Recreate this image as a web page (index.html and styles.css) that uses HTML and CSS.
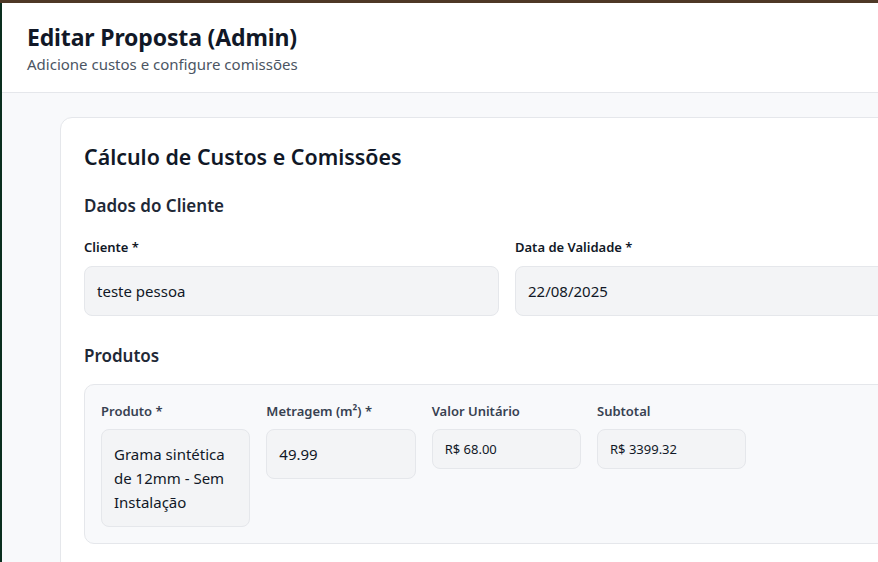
FILE: index.html
```html
<!DOCTYPE html>
<html lang="pt-BR">
<head>
<meta charset="utf-8">
<title>Editar Proposta (Admin)</title>
<link rel="stylesheet" href="styles.css">
</head>
<body>
<div class="window">
  <header class="page-header">
    <h1 class="page-title">Editar Proposta (Admin)</h1>
    <p class="page-subtitle">Adicione custos e configure comissões</p>
  </header>
  <main class="content">
    <section class="card">
      <h2 class="card-title">Cálculo de Custos e Comissões</h2>

      <h3 class="section-title">Dados do Cliente</h3>
      <div class="client-grid">
        <div class="field">
          <label class="label">Cliente *</label>
          <div class="input">teste pessoa</div>
        </div>
        <div class="field">
          <label class="label">Data de Validade *</label>
          <div class="input">22/08/2025</div>
        </div>
      </div>

      <h3 class="section-title products-title">Produtos</h3>
      <div class="product-box">
        <div class="product-grid">
          <div class="field">
            <label class="label label-muted">Produto *</label>
            <div class="input">Grama sintética de 12mm - Sem Instalação</div>
          </div>
          <div class="field">
            <label class="label label-muted">Metragem (m²) *</label>
            <div class="input">49.99</div>
          </div>
          <div class="field">
            <label class="label label-muted">Valor Unitário</label>
            <div class="input input-small">R$ 68.00</div>
          </div>
          <div class="field">
            <label class="label label-muted">Subtotal</label>
            <div class="input input-small">R$ 3399.32</div>
          </div>
        </div>
      </div>
    </section>
  </main>
</div>
</body>
</html>
```

FILE: styles.css
```css
html, body {
  margin: 0;
  padding: 0;
  overflow: hidden;
  height: 100%;
}

body {
  font-family: "Noto Sans", "Open Sans", sans-serif;
  color: #111827;
  background: #f8f9fb;
  border-top: 3px solid #4e3826;
  box-sizing: border-box;
}

.window {
  border-left: 2px solid #0a2e1e;
  min-height: 100%;
  box-sizing: border-box;
}

.page-header {
  background: #ffffff;
  border-bottom: 1px solid #e5e7eb;
  padding: 19px 25px 18px;
  height: 90px;
  box-sizing: border-box;
}

.page-title {
  margin: 0 0 2px;
  font-size: 23px;
  line-height: 30px;
  font-weight: 700;
  color: #111827;
  letter-spacing: -0.15px;
}

.page-subtitle {
  margin: 0;
  font-size: 15px;
  line-height: 20px;
  color: #4b5563;
}

.content {
  padding: 24px 0 0 58px;
}

.card {
  width: 894px;
  box-sizing: border-box;
  background: #ffffff;
  border: 1px solid #e5e7eb;
  border-radius: 12px;
  padding: 23px 23px 24px;
  min-height: 480px;
}

.card-title {
  margin: 0 0 19px;
  font-size: 21.4px;
  line-height: 32px;
  font-weight: 600;
  color: #111827;
}

.section-title {
  margin: 0 0 17px;
  font-size: 17px;
  line-height: 28px;
  font-weight: 600;
  color: #1f2937;
}

.products-title {
  margin-top: 26px;
  margin-bottom: 14px;
}

.client-grid {
  display: grid;
  grid-template-columns: 415px 1fr;
  column-gap: 16px;
}

.field {
  display: flex;
  flex-direction: column;
}

.label {
  font-size: 13px;
  line-height: 20px;
  font-weight: 600;
  color: #111827;
  margin-bottom: 9px;
}

.label-muted {
  color: #374151;
  margin-bottom: 8px;
}

.input {
  background: #f3f4f6;
  border: 1px solid #e5e7eb;
  border-radius: 8px;
  padding: 12px 12px;
  font-size: 15px;
  line-height: 24px;
  color: #111827;
}

.input-small {
  font-size: 13px;
  line-height: 20px;
  padding: 9px 12px;
}

.product-box {
  background: #f8f9fb;
  border: 1px solid #e5e7eb;
  border-radius: 10px;
  padding: 16px;
}

.product-grid {
  display: grid;
  grid-template-columns: repeat(4, 149.33px);
  column-gap: 16px;
  align-items: start;
}
```
